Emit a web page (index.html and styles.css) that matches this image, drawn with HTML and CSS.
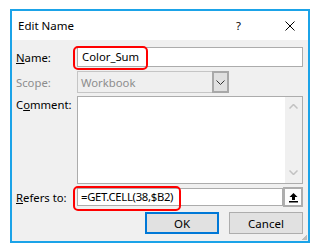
FILE: index.html
```html
<!DOCTYPE html>
<html lang="en">
<head>
    <meta charset="UTF-8">
    <title>Edit Name</title>
    <link rel="stylesheet" href="styles.css">
</head>
<body>
    <div class="dialog">
        <div class="titlebar">
            <span class="title">Edit Name</span>
            <span class="help">?</span>
            <span class="close">
                <svg width="10" height="10" viewBox="0 0 10 10"><path d="M0.5 0.5 L9.5 9.5 M9.5 0.5 L0.5 9.5" stroke="#000" stroke-width="1"/></svg>
            </span>
        </div>
        <div class="body">
            <div class="row row-name">
                <label class="label"><u>N</u>ame:</label>
                <div class="field text">
                    Color_Sum
                    <span class="mark mark-name"></span>
                </div>
            </div>
            <div class="row row-scope">
                <label class="label disabled">Scope:</label>
                <div class="field select">
                    <span class="select-value">Workbook</span>
                    <span class="drop">
                        <svg width="9" height="5" viewBox="0 0 9 5"><path d="M0.5 0.5 L4.5 4.5 L8.5 0.5" fill="none" stroke="#333" stroke-width="1"/></svg>
                    </span>
                </div>
            </div>
            <div class="row row-comment">
                <label class="label">C<u>o</u>mment:</label>
                <div class="field area">
                    <div class="scrollbar">
                        <svg width="9" height="5" viewBox="0 0 9 5"><path d="M0.5 4.5 L4.5 0.5 L8.5 4.5" fill="none" stroke="#c2c2c2" stroke-width="1.5"/></svg>
                        <svg width="9" height="5" viewBox="0 0 9 5"><path d="M0.5 0.5 L4.5 4.5 L8.5 0.5" fill="none" stroke="#c2c2c2" stroke-width="1.5"/></svg>
                    </div>
                </div>
            </div>
            <div class="row row-refers">
                <label class="label"><u>R</u>efers to:</label>
                <div class="field text refers">
                    =GET.CELL(38,$B2)
                    <span class="mark mark-refers"></span>
                </div>
                <button class="collapse">
                    <svg width="11" height="11" viewBox="0 0 11 11"><path d="M5.5 1 L1.5 5 L4 5 L4 8 L7 8 L7 5 L9.5 5 Z" fill="#000"/><rect x="1" y="9" width="9" height="1.5" fill="#000"/></svg>
                </button>
            </div>
            <div class="buttons">
                <button class="btn btn-ok">OK</button>
                <button class="btn">Cancel</button>
            </div>
            <span class="grip"></span>
        </div>
    </div>
</body>
</html>
```

FILE: styles.css
```css
body {
    margin: 0;
    padding: 9px 0 0 10px;
    background: #ffffff;
    font-family: 'Noto Sans', 'Open Sans', sans-serif;
    font-size: 11.3px;
    color: #000;
}
.dialog {
    width: 300px;
    height: 234px;
    box-sizing: border-box;
    border: 2px solid #1ba3e8;
    display: flex;
    flex-direction: column;
}
.titlebar {
    height: 29px;
    background: #fff;
    display: flex;
    align-items: center;
    padding-left: 6px;
}
.title {
    font-size: 11.5px;
    flex: 1;
}
.help {
    width: 12px;
    margin-right: 37px;
}
.close {
    width: 10px;
    margin-right: 13px;
    display: flex;
}
.body {
    flex: 1;
    position: relative;
    background: #f0f0f0;
    padding: 7px 5px 0 4px;
}
.row {
    display: flex;
    align-items: center;
}
.label {
    width: 61px;
    flex: none;
}
.label.disabled {
    color: #8d8d8d;
}
.field {
    position: relative;
    flex: 1;
    box-sizing: border-box;
    border: 1px solid #acacac;
    background: #fff;
}
.text {
    height: 20px;
    line-height: 18px;
    padding-left: 4px;
}
.row-scope {
    margin-top: 4px;
}
.select {
    flex: none;
    width: 152px;
    height: 22px;
    background: #efefef;
    border-color: #c5c5c5;
    display: flex;
    align-items: center;
    justify-content: space-between;
}
.select-value {
    color: #8d8d8d;
    padding-left: 3px;
}
.drop {
    width: 17px;
    height: 22px;
    margin: -1px -1px -1px 0;
    box-sizing: border-box;
    border: 2px solid #a8a8a8;
    background: #e0e0e0;
    display: flex;
    align-items: center;
    justify-content: center;
}
.row-comment {
    margin-top: 3px;
    align-items: flex-start;
}
.row-comment .label {
    margin-top: 1px;
}
.area {
    height: 88px;
    display: flex;
    justify-content: flex-end;
}
.scrollbar {
    width: 17px;
    background: #f0f0f0;
    display: flex;
    flex-direction: column;
    justify-content: space-between;
    align-items: center;
    padding: 7px 0 8px;
}
.row-refers {
    margin-top: 3px;
}
.refers {
    height: 18px;
    line-height: 16px;
    padding-left: 3px;
    letter-spacing: -0.3px;
}
.collapse {
    width: 20px;
    height: 20px;
    margin: 0;
    padding: 0;
    box-sizing: border-box;
    border: 2px solid #adadad;
    background: #fdfdfd;
    display: flex;
    align-items: center;
    justify-content: center;
}
.mark {
    position: absolute;
    border: 2px solid #ff0000;
    border-radius: 5px;
}
.mark-name {
    left: -5px;
    top: -2px;
    width: 71px;
    height: 20px;
}
.mark-refers {
    left: -5px;
    top: -3px;
    width: 104px;
    height: 21px;
}
.buttons {
    margin-top: 5px;
    display: flex;
    justify-content: flex-end;
    gap: 10px;
}
.btn {
    width: 74px;
    height: 22px;
    margin: 0;
    padding: 0;
    box-sizing: border-box;
    border: 1px solid #adadad;
    background: #e1e1e1;
    font-family: inherit;
    font-size: 11.5px;
    color: #000;
}
.btn-ok {
    border: 2px solid #0078d7;
}
.grip {
    position: absolute;
    right: 1px;
    bottom: 1px;
    width: 6px;
    height: 6px;
    background: linear-gradient(135deg, transparent 50%, #bcbcbc 50%);
}
```
